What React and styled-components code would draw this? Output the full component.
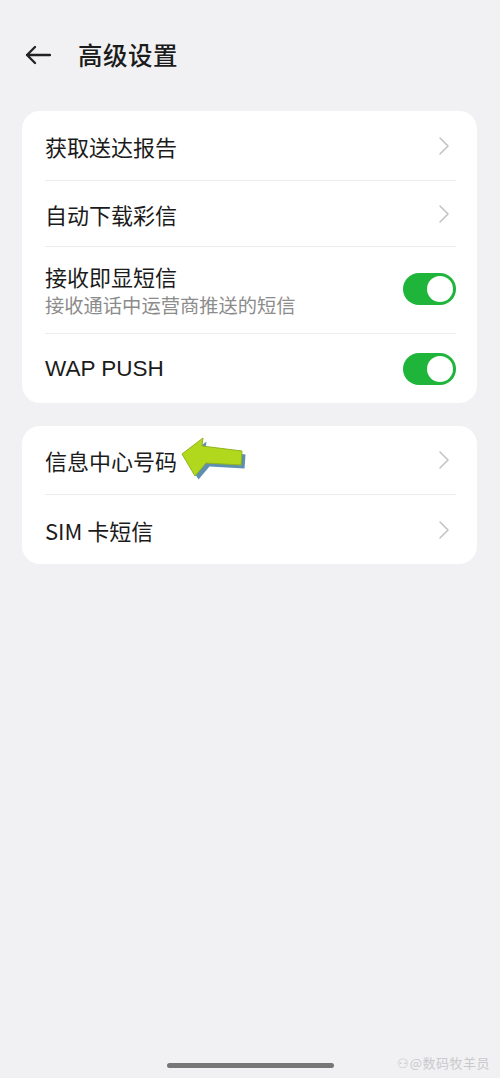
import React from 'react';
import styled, { createGlobalStyle } from 'styled-components';

const bg = "#f1f1f3";
const ink = "#1b1b1b";
const grey = "#8c8c8c";
const green = "#1fb43a";

const Global = createGlobalStyle`
    html, body {
        margin: 0;
        padding: 0;
        background: ${bg};
    }
    * {
        box-sizing: border-box;
    }
`

const Page = styled.div`
    position: relative;
    width: 500px;
    height: 1078px;
    display: flex;
    flex-direction: column;
    background: ${bg};
    font-family: "Noto Sans CJK SC", "Noto Sans", sans-serif;
    color: ${ink};
    overflow: hidden;
`

const Header = styled.div`
    height: 111px;
    display: flex;
    align-items: center;
    padding: 0 0 2px 25px;
    gap: 27px;
`

const Title = styled.h1`
    margin: 0;
    font-size: 24.5px;
    font-weight: 500;
    letter-spacing: 0.5px;
`

const Card = styled.div`
    margin: 0 23px ${p => p.gap || 0}px 22px;
    background: #fff;
    border-radius: 18px;
    padding: 0 21px 0 23px;
`

const Row = styled.div`
    position: relative;
    height: ${p => p.h}px;
    display: flex;
    align-items: center;
    justify-content: space-between;
    border-bottom: ${p => p.last ? "none" : "1px solid #ececec"};
`

const Texts = styled.div`
    display: flex;
    flex-direction: column;
`

const Label = styled.span`
    font-size: ${p => p.latin ? 22.5 : 22}px;
    line-height: 30px;
    color: ${ink};
    font-family: ${p => p.latin ? '"Liberation Sans", "Noto Sans CJK SC", sans-serif' : 'inherit'};
`

const Sub = styled.span`
    font-size: 19.3px;
    line-height: 28px;
    color: ${grey};
`

const Chevron = styled.svg`
    width: 12px;
    height: 20px;
    margin-right: 6px;
`

const Toggle = styled.div`
    width: 53px;
    height: 32px;
    border-radius: 16px;
    background: ${green};
    display: flex;
    align-items: center;
    justify-content: flex-end;
    padding-right: 3px;
    margin-top: ${p => p.offset || 0}px;
    &::after {
        content: "";
        width: 26px;
        height: 26px;
        border-radius: 50%;
        background: #fff;
    }
`

const Pointer = styled.svg`
    position: absolute;
    left: 133px;
    top: 6px;
    width: 70px;
    height: 52px;
`

const HomeBar = styled.div`
    margin: auto auto 10px;
    width: 167px;
    height: 5px;
    border-radius: 3px;
    background: #767676;
`

const Mark = styled.div`
    position: absolute;
    right: 10px;
    bottom: 6px;
    font-size: 13px;
    color: #c9c9cc;
    letter-spacing: 0.5px;
`

const Arrow = () => (
    <svg width="26" height="20" viewBox="0 0 26 20">
        <path d="M25 10H2M10 2 2 10l8 8" fill="none" stroke="#222" strokeWidth="2.3" strokeLinecap="round" strokeLinejoin="round"/>
    </svg>
)

const More = () => (
    <Chevron viewBox="0 0 12 20">
        <polyline points="2,2 10,10 2,18" fill="none" stroke="#c2c2c2" strokeWidth="1.6" strokeLinecap="round" strokeLinejoin="round"/>
    </Chevron>
)

const App = () => (
    <Page>
        <Global/>
        <Header>
            <Arrow/>
            <Title>高级设置</Title>
        </Header>

        <Card gap={23}>
            <Row h={70}><Label>获取送达报告</Label><More/></Row>
            <Row h={66}><Label>自动下载彩信</Label><More/></Row>
            <Row h={87}>
                <Texts>
                    <Label>接收即显短信</Label>
                    <Sub>接收通话中运营商推送的短信</Sub>
                </Texts>
                <Toggle offset={-2}/>
            </Row>
            <Row h={69} last><Label latin>WAP PUSH</Label><Toggle/></Row>
        </Card>

        <Card>
            <Row h={69}>
                <Label>信息中心号码</Label>
                <Pointer viewBox="0 0 70 52">
                    <polygon points="6,24 27,8 26,16 66,21 65,35 30,33 19,46" fill="#5f8fb0" transform="translate(1.5,1.5)"/>
                    <polygon points="4,22 25,6 24,14 64,19 63,33 28,31 17,44" fill="#b2d81e" stroke="#8fb51a" strokeWidth="1" strokeLinejoin="round"/>
                </Pointer>
                <More/>
            </Row>
            <Row h={69} last><Label>SIM 卡短信</Label><More/></Row>
        </Card>

        <HomeBar/>
        <Mark>⚇@数码牧羊员</Mark>
    </Page>
)

export default App
